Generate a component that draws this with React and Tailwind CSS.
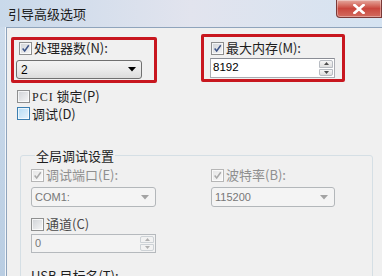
import React from "react";

const CJK = "font-['Noto_Sans_CJK_SC',sans-serif]";

function Check({ variant = "normal", checked = false }) {
  const box =
    variant === "hover"
      ? "border-[#3c7fb1] bg-gradient-to-br from-[#b5dcf5] to-[#e8f4fc]"
      : variant === "disabled"
      ? "border-[#b6b6b6] bg-gradient-to-br from-[#e6e6e6] to-[#f8f8f8]"
      : "border-[#8e8f8f] bg-gradient-to-br from-[#cfd2d6] to-[#f7f7f7]";
  const stroke = variant === "disabled" ? "#a9a9a9" : "#3d5487";
  return (
    <span className={`w-[13px] h-[13px] border ${box} flex items-center justify-center shrink-0`}>
      <span className="w-[11px] h-[11px] border border-white/70 flex items-center justify-center">
        {checked && (
          <svg width="11" height="11" viewBox="0 0 11 11">
            <path d="M2 5.5 L4.5 8.5 L9.5 1.5" fill="none" stroke={stroke} strokeWidth="1.8" />
          </svg>
        )}
      </span>
    </span>
  );
}

function Arrow({ color }) {
  return (
    <svg width="8" height="5" viewBox="0 0 8 5">
      <path d="M0 0 L8 0 L4 4.5 Z" fill={color} />
    </svg>
  );
}

function Spin({ disabled }) {
  const c = disabled ? "#b0b0b0" : "#4d4d4d";
  const part = disabled
    ? "flex-1 border border-[#cdd2d6] bg-[#f2f2f2] flex items-center justify-center"
    : "flex-1 border border-[#b8bcc2] bg-gradient-to-b from-[#f6f6f6] to-[#dedede] flex items-center justify-center";
  return (
    <div className="w-[15px] h-full flex flex-col gap-[1px] py-[1px] pr-[1px]">
      <div className={`${part} rounded-t-[2px]`}>
        <svg width="5" height="3" viewBox="0 0 5 3">
          <path d="M0 3 L5 3 L2.5 0 Z" fill={c} />
        </svg>
      </div>
      <div className={`${part} rounded-b-[2px]`}>
        <svg width="5" height="3" viewBox="0 0 5 3">
          <path d="M0 0 L5 0 L2.5 3 Z" fill={c} />
        </svg>
      </div>
    </div>
  );
}

function Label({ children, grey, tone }) {
  const color = grey ? "text-[#8f8f8f]" : tone === "mid" ? "text-[#4a4a4a]" : "text-[#1e1e1e]";
  return <span className={`${CJK} text-[13px] leading-[16px] ${color}`}>{children}</span>;
}

export default function App() {
  return (
    <div className="w-[382px] h-[276px] overflow-hidden flex flex-col bg-gradient-to-r from-[#c9d9ea] via-[#e2e4ee] to-[#d5e3f1]">
      {/* title bar */}
      <div className="h-[27px] flex items-start justify-between shrink-0">
        <span className={`${CJK} text-[13px] leading-[16px] text-[#1b1b1b] pl-[8px] pt-[6px]`}>
          引导高级选项
        </span>
        <div className="w-[46px] h-[18px] rounded-bl-[4px] border border-t-0 border-[#7a3a38] bg-gradient-to-b from-[#e4a89f] via-[#c9463d] to-[#d26b5f] flex items-center justify-center shadow-[inset_0_0_0_1px_rgba(255,255,255,0.35)]">
          <svg width="12" height="10" viewBox="0 0 12 10">
            <path d="M1.5 1 L10.5 9 M10.5 1 L1.5 9" stroke="#fff" strokeWidth="2.6" strokeLinecap="square" />
          </svg>
        </div>
      </div>

      <div className="flex flex-1 min-h-0">
        <div className="w-[6px] bg-gradient-to-b from-[#cddcec] to-[#b9cde2] border-r border-[#f1f5fa]" />
        <div className="flex-1 relative bg-[#f0f0f0] border-l border-t border-[#8fa4bc] flex flex-col">
          {/* top row */}
          <div className="flex items-start pl-[9px] pt-[12px]">
            <div className="w-[126px] flex flex-col">
              <div className="h-[16px] flex items-center gap-[2px] pl-[3px]">
                <Check checked />
                <Label>处理器数(N):</Label>
              </div>
              <div className="mt-[4px] h-[19px] rounded-[3px] border border-[#707070] bg-gradient-to-b from-[#f3f3f3] via-[#ebebeb] to-[#dcdcdc] flex items-center justify-between pl-[4px] pr-[5px]">
                <span className="font-['Liberation_Sans',sans-serif] text-[12px] text-black">2</span>
                <Arrow color="#000" />
              </div>
            </div>
            <div className="w-[125px] ml-[68px] flex flex-col">
              <div className="h-[16px] flex items-center gap-[2px] pl-[1px]">
                <Check checked />
                <Label>最大内存(M):</Label>
              </div>
              <div className="mt-[2px] h-[20px] border border-[#abadb3] border-t-[#8a8d95] bg-white flex items-center justify-between pl-[2px]">
                <span className="font-['Liberation_Sans',sans-serif] text-[11.5px] text-black">8192</span>
                <Spin />
              </div>
            </div>
          </div>

          {/* PCI / debug */}
          <div className="pl-[10px] mt-[9px] flex flex-col">
            <div className="h-[17px] flex items-center gap-[2px]">
              <Check />
              <Label>
                <span className="font-['Liberation_Serif',serif] text-[12px] tracking-[1px]">PCI</span> 锁定(P)
              </Label>
            </div>
            <div className="h-[17px] flex items-center gap-[2px]">
              <Check variant="hover" />
              <Label>调试(D)</Label>
            </div>
          </div>

          {/* group box */}
          <fieldset className="ml-[13px] mt-[21px] w-[353px] border border-[#d5dfe5] rounded-[3px] pl-[10px] pb-[20px]">
            <legend className="ml-[4px] px-[1px]">
              <Label>全局调试设置</Label>
            </legend>
            <div className="flex items-start">
              <div className="w-[125px] flex flex-col">
                <div className="h-[16px] flex items-center gap-[2px]">
                  <Check variant="disabled" checked />
                  <Label grey>调试端口(E):</Label>
                </div>
                <div className="mt-[4px] h-[20px] rounded-[3px] border border-[#b3b7ba] bg-[#f4f4f4] flex items-center justify-between pl-[3px] pr-[6px]">
                  <span className="font-['Liberation_Sans',sans-serif] text-[11px] text-[#777]">COM1:</span>
                  <Arrow color="#a3a3a3" />
                </div>
              </div>
              <div className="w-[124px] ml-[55px] flex flex-col">
                <div className="h-[16px] flex items-center gap-[2px]">
                  <Check variant="disabled" checked />
                  <Label grey>波特率(B):</Label>
                </div>
                <div className="mt-[4px] h-[20px] rounded-[3px] border border-[#b3b7ba] bg-[#f4f4f4] flex items-center justify-between pl-[3px] pr-[6px]">
                  <span className="font-['Liberation_Sans',sans-serif] text-[11px] text-[#777]">115200</span>
                  <Arrow color="#a3a3a3" />
                </div>
              </div>
            </div>
            <div className="w-[125px] mt-[9px] flex flex-col">
              <div className="h-[16px] flex items-center gap-[2px]">
                <Check />
                <Label tone="mid">通道(C)</Label>
              </div>
              <div className="mt-[2px] h-[19px] border border-[#b5b9bd] bg-[#f3f3f3] flex items-center justify-between pl-[3px]">
                <span className="font-['Liberation_Sans',sans-serif] text-[11px] text-[#777]">0</span>
                <Spin disabled />
              </div>
            </div>
            <div className="mt-[10px]">
              <Label>USB 目标名(T):</Label>
            </div>
          </fieldset>

          {/* annotation boxes */}
          <div className="absolute left-[4px] top-[9px] w-[146px] h-[46px] border-[3px] border-[#c8171f] rounded-[2px]" />
          <div className="absolute left-[194px] top-[6px] w-[144px] h-[48px] border-[3px] border-[#c8171f] rounded-[2px]" />
        </div>
      </div>
    </div>
  );
}
